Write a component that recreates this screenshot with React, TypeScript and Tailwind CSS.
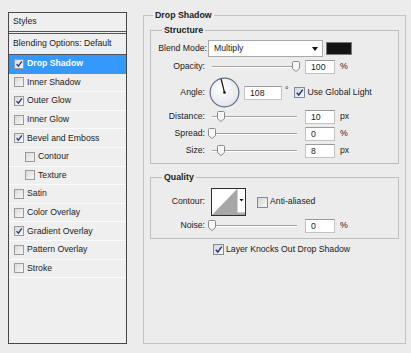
import React from "react";

type Item = { label: string; checked?: boolean; selected?: boolean; sub?: boolean };

const items: Item[] = [
  { label: "Drop Shadow", checked: true, selected: true },
  { label: "Inner Shadow" },
  { label: "Outer Glow", checked: true },
  { label: "Inner Glow" },
  { label: "Bevel and Emboss", checked: true },
  { label: "Contour", sub: true },
  { label: "Texture", sub: true },
  { label: "Satin" },
  { label: "Color Overlay" },
  { label: "Gradient Overlay", checked: true },
  { label: "Pattern Overlay" },
  { label: "Stroke" },
];

const Tick = () => (
  <svg viewBox="0 0 10 10" className="w-full h-full">
    <path d="M2 5.2 L4.2 7.8 L8.6 1.8" fill="none" stroke="#24398a" strokeWidth="1.7" />
  </svg>
);

const ListBox = ({ checked }: { checked?: boolean }) => (
  <span className="w-[10px] h-[10px] shrink-0 border border-[#9a9a9a] bg-linear-to-br from-[#dadada] to-[#f8f8f8] flex">
    {checked && <Tick />}
  </span>
);

const Checkbox = ({ checked }: { checked?: boolean }) => (
  <span className="w-[11px] h-[11px] shrink-0 border border-[#7f8aa3] bg-linear-to-br from-[#d6d6d6] to-[#f7f7f7] flex">
    {checked && <Tick />}
  </span>
);

const Slider = ({ pos }: { pos: number }) => (
  <div className="relative w-[88px] h-[17px]">
    <div className="absolute left-0 right-[3px] top-[8px] h-[2px] border-t border-[#a3a3a3] border-b border-b-white" />
    <svg className="absolute top-[3px]" style={{ left: pos - 4 }} width="8" height="11" viewBox="0 0 8 11">
      <path d="M1.5 .5h5a1 1 0 0 1 1 1v6l-3.5 3-3.5-3v-6a1 1 0 0 1 1-1z" fill="#f7f7f7" stroke="#8a8a8a" />
    </svg>
  </div>
);

const Field = ({ value, w = "w-[30px]" }: { value: string; w?: string }) => (
  <div className={`${w} h-[14px] shrink-0 bg-white border border-[#c2c2c2] border-t-[#9a9a9a] pl-[5px] leading-[12px]`}>
    {value}
  </div>
);

const Label = ({ text }: { text: string }) => (
  <span className="w-[54px] shrink-0 text-right">{text}</span>
);

const SliderRow = ({ label, pos, value, unit, mt }: { label: string; pos: number; value: string; unit: string; mt: string }) => (
  <div className={`flex items-center h-[17px] ${mt}`}>
    <Label text={label} />
    <div className="ml-[7px]">
      <Slider pos={pos} />
    </div>
    <div className="ml-[5px]">
      <Field value={value} />
    </div>
    <span className="ml-[5px]">{unit}</span>
  </div>
);

const Dial = () => {
  const a = (104 * Math.PI) / 180;
  return (
    <svg width="31" height="31" viewBox="0 0 31 31">
      <defs>
        <radialGradient id="dg" cx="40%" cy="35%" r="70%">
          <stop offset="0" stopColor="#ffffff" />
          <stop offset="1" stopColor="#e2e4e8" />
        </radialGradient>
      </defs>
      <circle cx="15.5" cy="15.5" r="14.4" fill="url(#dg)" stroke="#5f6f8b" strokeWidth="1.2" />
      <line x1="15.5" y1="15.5" x2={15.5 + 14 * Math.cos(a)} y2={15.5 - 14 * Math.sin(a)} stroke="#111" strokeWidth="1.2" />
      <circle cx="15.5" cy="15.5" r="1.3" fill="#111" />
    </svg>
  );
};

const ContourSwatch = () => (
  <svg width="35" height="28" viewBox="0 0 35 28">
    <rect x="0.5" y="0.5" width="34" height="27" fill="#fff" stroke="#2e2e2e" />
    <polygon points="1,27 26,1 26,27" fill="#a7a7a7" />
    <line x1="26.5" y1="1" x2="26.5" y2="27" stroke="#d0d0d0" />
    <polygon points="28.5,11 32.5,11 30.5,13.5" fill="#111" />
    <rect x="24" y="24.5" width="10" height="2.5" fill="#a7a7a7" />
  </svg>
);

export default function App() {
  return (
    <div className="w-[411px] h-[353px] bg-[#ececec] flex items-start text-[8.7px] text-[#1b1b1b] font-['Liberation_Sans',Arial,sans-serif] overflow-hidden">
      {/* styles list */}
      <div className="ml-[8px] mt-[12px] w-[119px] h-[332px] border border-[#474747] bg-[#efefef] flex flex-col">
        <div className="h-[21px] flex items-center pl-[4px] border-b-[3px] border-double border-[#555]">Styles</div>
        <div className="h-[21px] flex items-center pl-[4px] border-b border-[#555]">Blending Options: Default</div>
        {items.map((it) => (
          <div
            key={it.label}
            className={`h-[18.6px] flex items-center border-b ${it.selected ? "bg-[#3399ff] text-white font-bold border-[#3399ff]" : "border-[#fbfbfb]"} ${it.sub ? "pl-[16px]" : "pl-[5px]"}`}
          >
            <ListBox checked={it.checked} />
            <span className="ml-[3px]">{it.label}</span>
          </div>
        ))}
      </div>

      {/* drop shadow settings */}
      <fieldset className="ml-[16px] mt-[10px] w-[263px] h-[334px] border border-[#c3c3c3] px-[6px]">
        <legend className="ml-[3px] px-[2px] font-bold leading-[11px] text-[8.8px]">Drop Shadow</legend>

        <fieldset className="mt-[4px] border border-[#bdbdbd] pb-[4px]">
          <legend className="ml-[11px] px-[2px] font-bold leading-[11px] text-[8.8px]">Structure</legend>

          <div className="flex items-center h-[17px] mt-[4px]">
            <span className="w-[56px] shrink-0 text-right">Blend Mode:</span>
            <div className="ml-[1px] w-[115px] h-[17px] bg-white border border-[#a9a9a9] flex items-center justify-between pl-[5px] pr-[4px]">
              <span>Multiply</span>
              <svg width="6" height="4" viewBox="0 0 6 4">
                <polygon points="0,0 6,0 3,4" fill="#111" />
              </svg>
            </div>
            <div className="ml-[3px] w-[26px] h-[13px] bg-[#141414] border border-[#7a7a7a]" />
          </div>

          <SliderRow label="Opacity:" pos={84} value="100" unit="%" mt="mt-[1px]" />

          <div className="flex items-center h-[31px] mt-[2px]">
            <Label text="Angle:" />
            <div className="ml-[4px] flex">
              <Dial />
            </div>
            <div className="ml-[4px]">
              <Field value="108" w="w-[38px]" />
            </div>
            <span className="ml-[3px] self-start mt-[7px]">°</span>
            <div className="ml-[6px]">
              <Checkbox checked />
            </div>
            <span className="ml-[2px]">Use Global Light</span>
          </div>

          <SliderRow label="Distance:" pos={8.5} value="10" unit="px" mt="" />
          <SliderRow label="Spread:" pos={0} value="0" unit="%" mt="" />
          <SliderRow label="Size:" pos={8.5} value="8" unit="px" mt="" />
        </fieldset>

        <fieldset className="mt-[8px] border border-[#bdbdbd] pb-[4px]">
          <legend className="ml-[11px] px-[2px] font-bold leading-[11px] text-[8.8px]">Quality</legend>

          <div className="flex items-center h-[28px] mt-[5px]">
            <Label text="Contour:" />
            <div className="ml-[6px] flex">
              <ContourSwatch />
            </div>
            <div className="ml-[11px]">
              <Checkbox />
            </div>
            <span className="ml-[2px]">Anti-aliased</span>
          </div>

          <SliderRow label="Noise:" pos={0} value="0" unit="%" mt="mt-[1px]" />
        </fieldset>

        <div className="flex items-center h-[17px] mt-[2px] pl-[63px]">
          <Checkbox checked />
          <span className="ml-[2px]">Layer Knocks Out Drop Shadow</span>
        </div>
      </fieldset>
    </div>
  );
}
